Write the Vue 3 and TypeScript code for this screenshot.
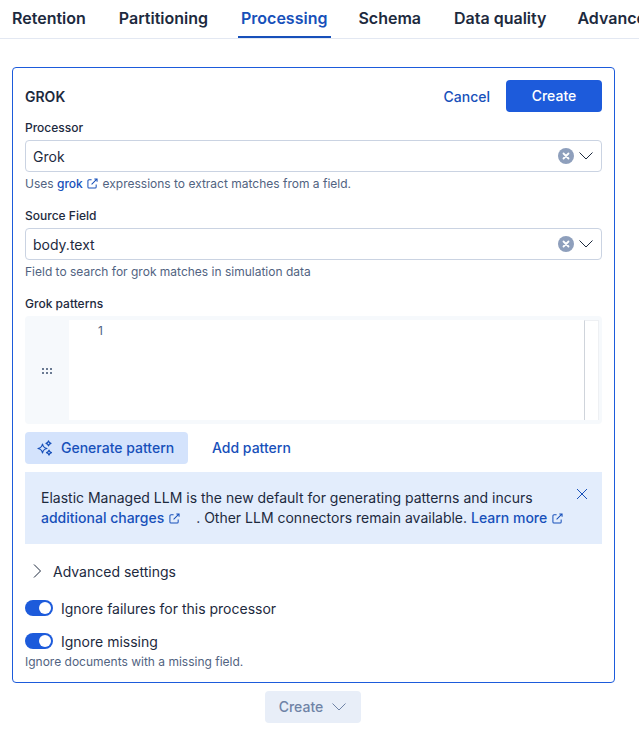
<script setup lang="ts">
const tabs: string[] = ['Retention', 'Partitioning', 'Processing', 'Schema', 'Data quality', 'Advanced']
</script>

<template>
  <div class="page">
    <nav class="tabs">
      <span v-for="t in tabs" :key="t" class="tab" :class="{ active: t === 'Processing' }">{{ t }}</span>
    </nav>
    <section class="card">
      <header class="head">
        <h2>GROK</h2>
        <div class="head-actions">
          <span class="cancel">Cancel</span>
          <span class="primary">Create</span>
        </div>
      </header>

      <label class="label">Processor</label>
      <div class="select">
        <span>Grok</span>
        <span class="select-icons">
          <svg width="16" height="16" viewBox="0 0 16 16"><circle cx="8" cy="8" r="8" fill="#8e9fbc"/><path d="M5.500 5.500l5 5M10.500 5.500l-5 5" stroke="#fff" stroke-width="1.800" stroke-linecap="round"/></svg>
          <svg width="16" height="16" viewBox="0 0 16 16"><path d="M1.500 4.500L8 11l6.500-6.500" fill="none" stroke="#1d2a3e" stroke-width="1"/></svg>
        </span>
      </div>
      <p class="help">Uses <a>grok</a> <svg class="ext" width="11" height="11" viewBox="0 0 12 12"><path d="M5 2H2.200A1.200 1.200 0 0 0 1 3.200v6.600A1.200 1.200 0 0 0 2.200 11h6.600A1.200 1.200 0 0 0 10 9.800V7M5 7l6-6M8 1h3v3" fill="none" stroke="#1750ba" stroke-width="1.100"/></svg> expressions to extract matches from a field.</p>

      <label class="label gap">Source Field</label>
      <div class="select">
        <span>body.text</span>
        <span class="select-icons">
          <svg width="16" height="16" viewBox="0 0 16 16"><circle cx="8" cy="8" r="8" fill="#8e9fbc"/><path d="M5.500 5.500l5 5M10.500 5.500l-5 5" stroke="#fff" stroke-width="1.800" stroke-linecap="round"/></svg>
          <svg width="16" height="16" viewBox="0 0 16 16"><path d="M1.500 4.500L8 11l6.500-6.500" fill="none" stroke="#1d2a3e" stroke-width="1"/></svg>
        </span>
      </div>
      <p class="help">Field to search for grok matches in simulation data</p>

      <label class="label gap">Grok patterns</label>
      <div class="editor">
        <div class="grip">
          <svg width="10" height="6" viewBox="0 0 10 6"><g fill="#6a7a92"><rect x="0" y="0" width="2" height="2"/><rect x="4" y="0" width="2" height="2"/><rect x="8" y="0" width="2" height="2"/><rect x="0" y="4" width="2" height="2"/><rect x="4" y="4" width="2" height="2"/><rect x="8" y="4" width="2" height="2"/></g></svg>
        </div>
        <div class="code">
          <span class="lineno">1</span>
          <div class="scroll"></div>
        </div>
      </div>

      <div class="pattern-actions">
        <span class="generate">
          <svg width="16" height="16" viewBox="0 0 16 16" fill="none" stroke="#1750ba" stroke-width="1.200" stroke-linejoin="round"><path d="M5.500 4c.5 2.700 1.800 4 4.500 4.500-2.700.5-4 1.800-4.500 4.500-.5-2.700-1.800-4-4.500-4.500C3.700 8 5 6.700 5.500 4Z"/><path d="M11.500 .800c.3 1.500 1 2.200 2.500 2.500-1.500.3-2.200 1-2.500 2.500-.3-1.500-1-2.200-2.500-2.500 1.500-.3 2.200-1 2.500-2.500Z"/><path d="M12 10.200c.3 1.500 1 2.200 2.500 2.500-1.500.3-2.200 1-2.500 2.500-.3-1.500-1-2.200-2.500-2.500 1.500-.3 2.200-1 2.500-2.500Z"/></svg>
          <span class="raised">Generate pattern</span>
        </span>
        <span class="add raised">Add pattern</span>
      </div>

      <div class="callout">
        <p>Elastic Managed LLM is the new default for generating patterns and incurs<br><a>additional charges</a> <svg class="ext" width="11" height="11" viewBox="0 0 12 12"><path d="M5 2H2.200A1.200 1.200 0 0 0 1 3.200v6.600A1.200 1.200 0 0 0 2.200 11h6.600A1.200 1.200 0 0 0 10 9.800V7M5 7l6-6M8 1h3v3" fill="none" stroke="#1750ba" stroke-width="1.100"/></svg><span class="spacer"></span>. Other LLM connectors remain available. <a>Learn more</a> <svg class="ext" width="11" height="11" viewBox="0 0 12 12"><path d="M5 2H2.200A1.200 1.200 0 0 0 1 3.200v6.600A1.200 1.200 0 0 0 2.200 11h6.600A1.200 1.200 0 0 0 10 9.800V7M5 7l6-6M8 1h3v3" fill="none" stroke="#1750ba" stroke-width="1.100"/></svg></p>
        <svg class="close" width="12" height="12" viewBox="0 0 12 12"><path d="M1 1l10 10M11 1L1 11" stroke="#1750ba" stroke-width="1" fill="none"/></svg>
      </div>

      <div class="advanced">
        <svg width="16" height="16" viewBox="0 0 16 16"><path d="M5 1.500L11.500 8 5 14.500" fill="none" stroke="#1d2a3e" stroke-width="1"/></svg>
        <span>Advanced settings</span>
      </div>

      <div class="switch-row first"><span class="switch"><i></i></span><span>Ignore failures for this processor</span></div>
      <div class="switch-row second"><span class="switch"><i></i></span><span>Ignore missing</span></div>
      <p class="help tight">Ignore documents with a missing field.</p>
    </section>

    <div class="footer">
      <span class="disabled"><span class="raised">Create</span>
        <svg width="16" height="16" viewBox="0 0 16 16"><path d="M1.500 4.500L8 11l6.500-6.500" fill="none" stroke="#6f83a6" stroke-width="1"/></svg>
      </span>
    </div>
  </div>
</template>

<style>
html, body { margin: 0; background: #fff; }
</style>

<style scoped>
.page {
  width: 639px;
  height: 745px;
  overflow: hidden;
  font-family: Inter, "Liberation Sans", sans-serif;
  color: #1d2a3e;
  box-sizing: border-box;
}
.tabs {
  display: flex;
  gap: 24px;
  height: 39px;
  padding-left: 8px;
  box-sizing: border-box;
  border-bottom: 1px solid #e3e8f2;
  white-space: nowrap;
  overflow: hidden;
}
.tab {
  font-size: 16px;
  font-weight: 600;
  line-height: 37px;
  padding: 0 4px;
  height: 38px;
  box-sizing: border-box;
}
.tab:nth-child(2) { margin-left: 1px; }
.tab:nth-child(3) { margin-left: 2px; padding-left: 3px; }
.tab:nth-child(4) { margin-left: -1px; }
.tab:nth-child(5) { margin-left: 1px; }
.tab:nth-child(6) { margin-left: -1px; }
.tab.active {
  color: #1750ba;
  border-bottom: 2px solid #1750ba;
}
.card {
  margin: 28px 24px 0 12px;
  width: 603px;
  height: 616px;
  box-sizing: border-box;
  border: 1px solid #1d5bdb;
  border-radius: 4px;
  padding: 12px;
}
.head {
  display: flex;
  justify-content: space-between;
  align-items: center;
  height: 32px;
}
h2 {
  margin: 0;
  font-size: 14px;
  font-weight: 600;
}
.head-actions {
  display: flex;
  align-items: center;
}
.cancel {
  color: #1750ba;
  font-size: 14px;
  font-weight: 500;
  margin-right: 16px;
}
.primary {
  width: 96px;
  height: 32px;
  line-height: 32px;
  text-align: center;
  background: #1d5bdb;
  color: #fff;
  border-radius: 4px;
  font-size: 14px;
  font-weight: 500;
}
.label {
  display: block;
  font-size: 12px;
  font-weight: 500;
  line-height: 20px;
  margin-top: 6px;
  height: 22px;
}
.label.gap {
  margin-top: 14px;
}
.select {
  height: 32px;
  box-sizing: border-box;
  border: 1px solid #cad3e2;
  border-radius: 4px;
  padding: 0 7px;
  display: flex;
  align-items: center;
  justify-content: space-between;
  font-size: 14px;
}
.select-icons {
  display: flex;
  align-items: center;
  gap: 4px;
  margin-top: -1px;
}
.select-icons svg { display: block; }
.help {
  margin: 4px 0 0;
  font-size: 12px;
  line-height: 16px;
  color: #516381;
}
.help a {
  color: #1750ba;
  font-weight: 500;
}
.ext {
  vertical-align: -1px;
  margin: 0 1px;
}
.editor {
  height: 108px;
  background: #f6f9fc;
  border-radius: 4px;
  display: flex;
  padding: 4px 3px 4px 0;
  box-sizing: border-box;
}
.grip {
  width: 44px;
  flex: none;
  display: flex;
  align-items: center;
  justify-content: center;
  padding-top: 2px;
  box-sizing: border-box;
}
.grip svg { display: block; }
.code {
  flex: 1;
  background: #fff;
  display: flex;
  justify-content: space-between;
}
.lineno {
  margin-left: 29px;
  margin-top: 3px;
  font-size: 12px;
  line-height: 16px;
  color: #516381;
}
.scroll {
  width: 15px;
  border-left: 1px solid #cfd4db;
  border-right: 1px solid #eef0f3;
  border-top: 1px solid #eef0f3;
  box-sizing: border-box;
}
.pattern-actions {
  display: flex;
  align-items: center;
  margin-top: 8px;
  height: 32px;
  font-size: 14px;
  font-weight: 500;
  color: #1750ba;
}
.raised { padding-bottom: 1px; }
.generate {
  width: 163px;
  height: 32px;
  box-sizing: border-box;
  padding-left: 12px;
  display: flex;
  align-items: center;
  gap: 8px;
  background: #d4e3fc;
  border-radius: 4px;
}
.add {
  margin-left: 24px;
}
.callout {
  margin-top: 8px;
  height: 72px;
  box-sizing: border-box;
  background: #e3edfc;
  padding: 16px;
  display: flex;
  justify-content: space-between;
  font-size: 14px;
  line-height: 20px;
}
.callout p { margin: 0; white-space: nowrap; }
.callout a {
  color: #1750ba;
  font-weight: 500;
}
.spacer {
  display: inline-block;
  width: 15px;
}
.close {
  flex: none;
  margin: 0 -2px 0 0;
}
.advanced {
  display: flex;
  align-items: center;
  gap: 8px;
  margin-top: 17px;
  height: 20px;
  padding-left: 4px;
  font-size: 14px;
}
.advanced svg { flex: none; }
.switch-row {
  display: flex;
  align-items: center;
  gap: 8px;
  font-size: 14px;
  height: 20px;
}
.switch-row.first { margin-top: 17px; }
.switch-row.second { margin-top: 13px; }
.switch {
  width: 28px;
  height: 16px;
  border-radius: 8px;
  background: #1d5bdb;
  position: relative;
  flex: none;
}
.switch i {
  position: absolute;
  right: 2px;
  top: 2px;
  width: 12px;
  height: 12px;
  border-radius: 50%;
  background: #fff;
}
.help.tight { margin-top: 3px; }
.footer {
  display: flex;
  justify-content: center;
  margin-top: 8px;
  width: 626px;
}
.disabled {
  width: 96px;
  height: 32px;
  box-sizing: border-box;
  background: #e8eef8;
  border-radius: 4px;
  display: flex;
  align-items: center;
  justify-content: center;
  gap: 8px;
  font-size: 14px;
  font-weight: 500;
  color: #6f83a6;
}
</style>
